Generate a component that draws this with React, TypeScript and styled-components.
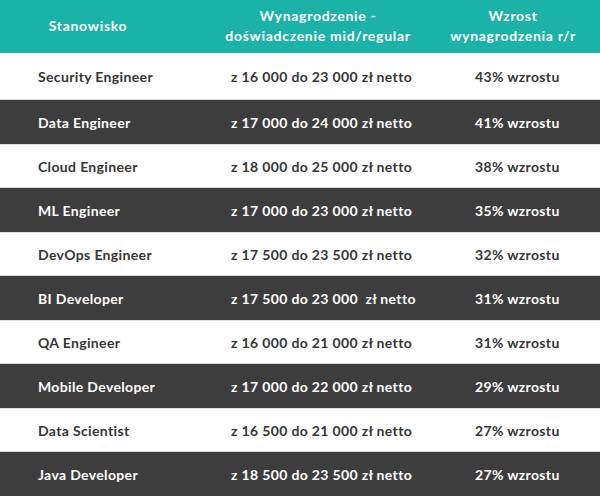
import React from "react";
import styled, { createGlobalStyle } from "styled-components";

const Global = createGlobalStyle`
  html, body { margin: 0; padding: 0; background: #ffffff; }
  body { font-family: "Lato", "Noto Sans", sans-serif; -webkit-font-smoothing: antialiased; }
`;

const Table = styled.div`
  width: 600px;
  display: flex;
  flex-direction: column;
`;

const HeaderRow = styled.div`
  display: grid;
  grid-template-columns: 176px 284px 106px 1fr;
  height: 53px;
  background: #1bb3a7;
  color: #ffffff;
  font-weight: 700;
  font-size: 14px;
  letter-spacing: 0.7px;
  line-height: 20px;
`;

const HeadCell = styled.div`
  display: flex;
  align-items: center;
  justify-content: center;
  text-align: center;
  min-width: 0;
  white-space: nowrap;
  padding-bottom: 1px;
`;

const Row = styled.div<{ $dark: boolean; $first?: boolean }>`
  box-sizing: border-box;
  display: grid;
  grid-template-columns: 176px 284px 106px 1fr;
  align-items: center;
  height: ${(p) => (p.$first ? 47 : 44)}px;
  background: ${(p) => (p.$dark ? "#3d3d3d" : "#ffffff")};
  color: ${(p) => (p.$dark ? "#ffffff" : "#363636")};
  border-bottom: ${(p) => (p.$dark ? "none" : "1px solid #d4d4d4")};
  border-top: ${(p) => (p.$dark || p.$first ? "none" : "1px solid #e2e2e2")};
  font-size: 14px;
  font-weight: 700;
  letter-spacing: 0.35px;
`;

const Cell = styled.div<{ $pad: number }>`
  padding-left: ${(p) => p.$pad}px;
  white-space: pre;
  min-width: 0;
`;

const rows: [string, string, string][] = [
  ["Security Engineer", "z 16 000 do 23 000 zł netto", "43% wzrostu"],
  ["Data Engineer", "z 17 000 do 24 000 zł netto", "41% wzrostu"],
  ["Cloud Engineer", "z 18 000 do 25 000 zł netto", "38% wzrostu"],
  ["ML Engineer", "z 17 000 do 23 000 zł netto", "35% wzrostu"],
  ["DevOps Engineer", "z 17 500 do 23 500 zł netto", "32% wzrostu"],
  ["BI Developer", "z 17 500 do 23 000  zł netto", "31% wzrostu"],
  ["QA Engineer", "z 16 000 do 21 000 zł netto", "31% wzrostu"],
  ["Mobile Developer", "z 17 000 do 22 000 zł netto", "29% wzrostu"],
  ["Data Scientist", "z 16 500 do 21 000 zł netto", "27% wzrostu"],
  ["Java Developer", "z 18 500 do 23 500 zł netto", "27% wzrostu"],
];

export default function App() {
  return (
    <>
      <Global />
      <Table>
        <HeaderRow>
          <HeadCell>Stanowisko</HeadCell>
          <HeadCell>
            Wynagrodzenie -<br />
            doświadczenie mid/regular
          </HeadCell>
          <HeadCell>
            Wzrost
            <br />
            wynagrodzenia r/r
          </HeadCell>
          <div />
        </HeaderRow>
        {rows.map((r, i) => (
          <Row key={r[0]} $dark={i % 2 === 1} $first={i === 0}>
            <Cell $pad={38}>{r[0]}</Cell>
            <Cell $pad={55}>{r[1]}</Cell>
            <Cell $pad={15}>{r[2]}</Cell>
            <div />
          </Row>
        ))}
      </Table>
    </>
  );
}
